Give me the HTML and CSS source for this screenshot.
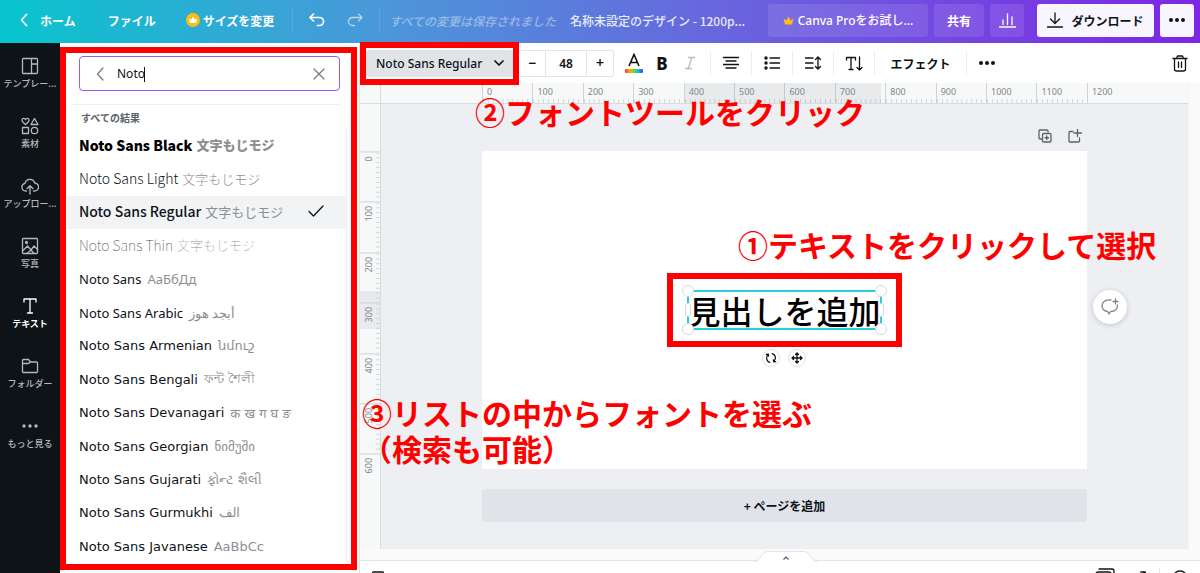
FILE: index.html
```html
<!DOCTYPE html>
<html lang="ja">
<head>
<meta charset="utf-8">
<meta name="viewport" content="width=device-width, initial-scale=1">
<title>名称未設定のデザイン</title>
<link rel="stylesheet" href="styles.css">
</head>
<body>
<div class="app">
  <header class="topbar">
    <a class="nav-link home" href="#">
      <svg width="8" height="14" viewBox="0 0 8 14" class="line w2"><path d="M6.500 1.500 1.500 7l5 5.500"/></svg>ホーム</a>
    <button class="nav-link file">ファイル</button>
    <button class="nav-link resize">
      <svg width="14" height="14" viewBox="0 0 14 14"><circle cx="7" cy="7" r="7" fill="#fdbc16"/><path d="M3.800 10 2.800 5.200l2.400 1.600L7 3.500l1.800 3.300 2.400-1.600L10.200 10z" fill="#fff"/></svg>サイズを変更</button>
    <span class="top-sep"></span>
    <button class="icon-btn undo" aria-label="元に戻す"><svg width="16" height="14" viewBox="0 0 16 14" class="line w2"><path d="M4.500 1 1 4.500 4.500 8M1 4.500h9.500a4 4 0 0 1 0 8H8.500"/></svg></button>
    <button class="icon-btn redo" aria-label="やり直す"><svg width="16" height="14" viewBox="0 0 16 14" class="line"><path d="M11.500 1 15 4.500 11.500 8M15 4.500H5.500a4 4 0 0 0 0 8h2"/></svg></button>
    <span class="top-sep"></span>
    <span class="saved">すべての変更は保存されました</span>
    <span class="doc-title">名称未設定のデザイン - 1200p...</span>
    <div class="top-actions">
      <button class="btn ghost pro"><svg width="11" height="9" viewBox="0 0 11 9"><path d="M2 8.500 .500 2.500 3.300 4.500 5.500 .500l2.200 4 2.800-2L9 8.500z" fill="#fdbc16"/></svg>Canva Proをお試し...</button>
      <button class="btn ghost share">共有</button>
      <button class="btn ghost stats" aria-label="統計"><svg width="17" height="15" viewBox="0 0 17 15" class="line"><path d="M.500 14h16M4 11.500V7M8.500 11.500V1M13 11.500V4"/></svg></button>
      <button class="btn solid download"><svg width="16" height="16" viewBox="0 0 16 16" class="line"><path d="M8 1v10M3.500 7 8 11.500 12.500 7M.500 15h15"/></svg>ダウンロード</button>
      <button class="btn solid more" aria-label="その他"><svg width="16" height="4" viewBox="0 0 16 4" fill="#0e1318"><circle cx="2" cy="2" r="2"/><circle cx="8" cy="2" r="2"/><circle cx="14" cy="2" r="2"/></svg></button>
    </div>
  </header>

  <div class="workspace">
    <nav class="rail">
      <button class="rail-item"><svg width="18" height="18" viewBox="0 0 18 18" class="line"><rect x="1.500" y="1.500" width="15" height="15" rx="1"/><path d="M10.500 1.500v15M10.500 7h6"/></svg><span>テンプレー...</span></button>
      <button class="rail-item"><svg width="18" height="18" viewBox="0 0 18 18" class="line"><path d="M4.500 7.500C2 5.500 1 4.600 1 3.200 1 1 3.800.700 4.500 2.600 5.200.700 8 1 8 3.200 8 4.600 7 5.500 4.500 7.500zM13.500 1.500 17 7.500h-7z"/><rect x="1.500" y="10.500" width="6" height="6"/><circle cx="13.500" cy="13.500" r="3.200"/></svg><span>素材</span></button>
      <button class="rail-item"><svg width="18" height="18" viewBox="0 0 18 18" class="line"><path d="M5.500 14H4.700A3.900 3.900 0 0 1 4 6.300 5 5 0 0 1 13.700 6 4 4 0 0 1 13.500 14h-1M9 17V9M6.200 11.500 9 8.700l2.800 2.800"/></svg><span>アップロー...</span></button>
      <button class="rail-item"><svg width="18" height="18" viewBox="0 0 18 18" class="line"><rect x="1.500" y="1.500" width="15" height="15" rx="1"/><circle cx="5.500" cy="5.500" r="1"/><path d="m1.500 14 5-5 3.500 4 3-4 3.500 3.500M6 16.500l4-3.500 3 3.500"/></svg><span>写真</span></button>
      <button class="rail-item active"><svg width="18" height="18" viewBox="0 0 18 18" class="line"><path d="M3 5V2h12v3M9 2v14M6.500 16h5"/></svg><span>テキスト</span></button>
      <button class="rail-item"><svg width="18" height="18" viewBox="0 0 18 18" class="line"><path d="M1.500 14.500v-11a1 1 0 0 1 1-1h5l2 2.500h6a1 1 0 0 1 1 1v8.500a1 1 0 0 1-1 1h-13a1 1 0 0 1-1-1zM1.500 6.500h6L9.500 5"/></svg><span>フォルダー</span></button>
      <button class="rail-item"><svg width="18" height="18" viewBox="0 0 18 18" fill="currentColor"><circle cx="3" cy="9" r="1.700"/><circle cx="9" cy="9" r="1.700"/><circle cx="15" cy="9" r="1.700"/></svg><span>もっと見る</span></button>
    </nav>

    <section class="panel marked">
      <div class="search">
        <button class="icon-btn" aria-label="戻る"><svg width="8" height="14" viewBox="0 0 8 14" class="line"><path d="M7 1 1.500 7 7 13"/></svg></button>
        <div class="search-field"><input type="text" value="Noto" aria-label="フォントを検索"><span class="caret"></span></div>
        <button class="icon-btn" aria-label="消去"><svg width="12" height="12" viewBox="0 0 12 12" class="line"><path d="m1 1 10 10M11 1 1 11"/></svg></button>
      </div>
      <h2 class="results-title">すべての結果</h2>
      <ul class="fonts">
        <li><button class="font jp black">Noto Sans Black<span>文字もじモジ</span></button></li>
        <li><button class="font jp light">Noto Sans Light<span>文字もじモジ</span></button></li>
        <li><button class="font jp regular selected">Noto Sans Regular<span>文字もじモジ</span><svg width="16" height="12" viewBox="0 0 16 12" class="line check"><path d="m1 6.500 4.500 4.500L15 1"/></svg></button></li>
        <li><button class="font jp thin">Noto Sans Thin<span>文字もじモジ</span></button></li>
        <li><button class="font">Noto Sans<span>АаБбДд</span></button></li>
        <li><button class="font">Noto Sans Arabic<span>أبجد هوز</span></button></li>
        <li><button class="font wide">Noto Sans Armenian<span>նմուշ</span></button></li>
        <li><button class="font wide">Noto Sans Bengali<span>ফন্ট শৈলী</span></button></li>
        <li><button class="font wide">Noto Sans Devanagari<span>क ख ग घ ङ</span></button></li>
        <li><button class="font wide">Noto Sans Georgian<span>ნიმუში</span></button></li>
        <li><button class="font wide">Noto Sans Gujarati<span>ફોન્ટ શૈલી</span></button></li>
        <li><button class="font wide">Noto Sans Gurmukhi<span>الف</span></button></li>
        <li><button class="font wide">Noto Sans Javanese<span>AaBbCc</span></button></li>
      </ul>
    </section>

    <main class="editor">
      <div class="toolbar">
        <div class="font-tool marked"><button class="font-select">Noto Sans Regular<svg width="10" height="6" viewBox="0 0 10 6" class="line w2"><path d="m1 1 4 4 4-4"/></svg></button></div>
        <div class="stepper"><button aria-label="小さく">−</button><input type="text" value="48" aria-label="フォントサイズ"><button aria-label="大きく">+</button></div>
        <div class="style-tools">
          <button class="tool color" aria-label="文字色"><svg width="20" height="20" viewBox="0 0 20 20"><defs><linearGradient id="hue"><stop offset="0" stop-color="#ff3030"/><stop offset=".25" stop-color="#ffa800"/><stop offset=".5" stop-color="#6fdc2a"/><stop offset=".75" stop-color="#12b8e8"/><stop offset="1" stop-color="#4a3df5"/></linearGradient></defs><path d="M5 13 10 1.500 15 13M6.700 9.500h6.600" fill="none" stroke="#0e1318" stroke-width="1.600"/><rect x="1" y="16" width="18" height="4" rx="1" fill="url(#hue)"/></svg></button>
          <button class="tool bold">B</button>
          <button class="tool italic" aria-label="斜体"><svg width="12" height="14" viewBox="0 0 12 14" class="line"><path d="M4.500 1.500h6M1.500 12.500h6M7.800 1.500 4.200 12.500"/></svg></button>
        </div>
        <button class="tool cell" aria-label="配置"><svg width="16" height="14" viewBox="0 0 16 14" class="line"><path d="M.500 1.500h15M3 5h10M.500 8.500h15M3 12h10"/></svg></button>
        <button class="tool cell" aria-label="箇条書き"><svg width="16" height="14" viewBox="0 0 16 14" class="line"><path d="M6 2h9.500M6 7h9.500M6 12h9.500"/><g fill="currentColor" stroke="none"><circle cx="2" cy="2" r="1.700"/><circle cx="2" cy="7" r="1.700"/><circle cx="2" cy="12" r="1.700"/></g></svg></button>
        <button class="tool cell" aria-label="間隔"><svg width="16" height="14" viewBox="0 0 16 14" class="line"><path d="M.500 2H8M.500 7H8M.500 12H8M13 1v12M10.500 3.500 13 1l2.500 2.500M10.500 10.500 13 13l2.500-2.500"/></svg></button>
        <button class="tool cell" aria-label="縦書き"><svg width="18" height="15" viewBox="0 0 18 15" class="line"><path d="M1.500 4V1.500h9V4M6 1.500v12M4 13.500h4M14.500 1v13M12 11.500l2.500 2.500 2.500-2.500"/></svg></button>
        <button class="tool cell effects">エフェクト</button>
        <button class="tool cell" aria-label="その他"><svg width="16" height="4" viewBox="0 0 16 4" fill="currentColor"><circle cx="2" cy="2" r="2"/><circle cx="8" cy="2" r="2"/><circle cx="14" cy="2" r="2"/></svg></button>
        <button class="tool trash" aria-label="削除"><svg width="16" height="17" viewBox="0 0 16 17" class="line"><path d="M1 3.500h14M5 3.500V2a1 1 0 0 1 1-1h4a1 1 0 0 1 1 1v1.500M2.500 3.500V14a2 2 0 0 0 2 2h7a2 2 0 0 0 2-2V3.500M6.500 7v5.500M9.500 7v5.500"/></svg></button>
      </div>

      <div class="board">
        <div class="corner"></div>
        <div class="ruler across">
          <span>0</span><span>100</span><span>200</span><span>300</span><span>400</span><span>500</span><span>600</span><span>700</span><span>800</span><span>900</span><span>1000</span><span>1100</span><span class="end">1200</span>
          <i class="range"></i>
        </div>
        <div class="scroll-y"></div>
        <div class="ruler down">
          <i class="range"></i>
          <span>0</span><span>100</span><span>200</span><span>300</span><span>400</span><span>500</span><span class="end">600</span>
        </div>
        <div class="stage">
          <div class="page-tools">
            <button class="icon-btn" aria-label="ページを複製"><svg width="14" height="14" viewBox="0 0 14 14" class="line"><path d="M3.500 10H2a1 1 0 0 1-1-1V2a1 1 0 0 1 1-1h7a1 1 0 0 1 1 1v1"/><rect x="4.500" y="4.500" width="8.500" height="8.500" rx="1"/><path d="M8.750 7v3.500M7 8.750h3.500"/></svg></button>
            <button class="icon-btn" aria-label="ページを追加"><svg width="14" height="14" viewBox="0 0 14 14" class="line"><path d="M5 2.500H2a1 1 0 0 0-1 1V12a1 1 0 0 0 1 1h8.500a1 1 0 0 0 1-1V9M9.500 0v7.500M6 4h7.500"/></svg></button>
          </div>
          <div class="artboard">
            <div class="selection marked">
              <div class="textbox">見出しを追加
                <i class="knob nw"></i><i class="knob ne"></i><i class="knob sw"></i><i class="knob se"></i><i class="grip west"></i><i class="grip east"></i>
              </div>
              <div class="handles">
                <button aria-label="回転"><svg width="12" height="12" viewBox="0 0 12 12" class="line"><path d="M4.800 10.300A4.400 4.400 0 0 1 3 2.800M1.300 2.300l2-.200.300 2M7.200 1.700A4.400 4.400 0 0 1 9 9.200M10.700 9.700l-2 .200-.300-2"/></svg></button>
                <button aria-label="移動"><svg width="12" height="12" viewBox="0 0 12 12" class="line"><path d="M6 1v10M1 6h10M4.500 2.500 6 1l1.500 1.500M4.500 9.500 6 11l1.500-1.500M2.500 4.500 1 6l1.500 1.500M9.500 4.500 11 6 9.500 7.500"/></svg></button>
              </div>
            </div>
            <p class="note step1">①テキストをクリックして選択</p>
            <button class="comment" aria-label="コメント"><svg width="20" height="18" viewBox="0 0 20 18" class="line"><path d="M11 2C5.500 1.500 2 4 2 8c0 3 2.500 5 5.500 5.500L9 16l1.500-2.300C15 13.500 17.500 11 17.500 7M15.500 1v5M13 3.500h5"/></svg></button>
          </div>
          <button class="add-page">+ ページを追加</button>
          <p class="note step2">②フォントツールをクリック</p>
          <p class="note step3">③リストの中からフォントを選ぶ<br>（検索も可能）</p>
        </div>
        <div class="scroll-y"></div>
      </div>

      <footer class="bottom">
        <button class="drawer" aria-label="ページ一覧を開く"><svg width="64" height="12" viewBox="0 0 64 12"><path d="M0 11.500C8 11 7 1.500 14 1.500h36c7 0 6 9.500 14 10" fill="#fff" stroke="#e2e4e7"/><path d="m29.500 9.500 2.500-2.500 2.500 2.500" fill="none" stroke="#555b62" stroke-width="1.200"/></svg></button>
        <div class="status">
          <button class="icon-btn" aria-label="メモ"><svg width="12" height="14" viewBox="0 0 12 14" class="line"><rect x=".500" y="1" width="11" height="12" rx="1"/></svg></button>
          <div class="status-right">
            <button class="icon-btn grid-view" aria-label="グリッド"><svg width="20" height="18" viewBox="0 0 20 18" class="line"><path d="M4 1h13a2 2 0 0 1 2 2v10"/><rect x="1" y="4" width="15" height="13" rx="2"/></svg></button>
            <button class="icon-btn full-view" aria-label="全画面"><svg width="16" height="16" viewBox="0 0 16 16" class="line w2"><path d="M10 4h4v4M14 4 2 16"/></svg></button>
            <span class="status-sep"></span>
            <button class="icon-btn" aria-label="ヘルプ"><svg width="16" height="16" viewBox="0 0 16 16" class="line"><circle cx="8" cy="10" r="7"/></svg></button>
          </div>
        </div>
      </footer>
    </main>
  </div>
</div>
</body>
</html>
```

FILE: styles.css
```css
* { box-sizing: border-box; }

:root {
  --ink: #0e1318;
  --mark: #ff0000;
  --line: #e2e4e7;
  --inset: 101px;
  --art-width: calc(100vw - 595px);
  --unit: calc(var(--art-width) / 12);
}

body {
  margin: 0;
  color: var(--ink);
  font-family: "Noto Sans", "Noto Sans CJK JP", sans-serif;
  font-size: 12px;
}

button, input {
  margin: 0;
  padding: 0;
  border: 0;
  background: none;
  color: inherit;
  font: inherit;
}

svg { flex: none; display: block; }

.line {
  fill: none;
  stroke: currentColor;
  stroke-width: 1.3;
  stroke-linecap: round;
  stroke-linejoin: round;
}
.line.w2 { stroke-width: 1.7; }

.icon-btn { display: flex; align-items: center; justify-content: center; }

.app {
  display: flex;
  flex-direction: column;
  height: 100vh;
  overflow: hidden;
}

/* Top bar */
.topbar {
  flex: none;
  display: flex;
  align-items: center;
  height: 43px;
  padding: 0 6px 3px 20px;
  background: linear-gradient(90deg, #08c5cd 0%, #4b97d9 32%, #6a62de 62%, #7d26e4 100%);
  color: #fff;
  font-family: "Noto Sans CJK JP", sans-serif;
  font-weight: 700;
  white-space: nowrap;
}
.nav-link {
  display: flex;
  align-items: center;
  color: #fff;
  text-decoration: none;
}
.home { gap: 12px; }
.file { margin-left: 32px; }
.resize { gap: 3px; margin-left: 30px; }
.top-sep { width: 1px; height: 24px; margin-left: 18px; background: rgba(255, 255, 255, .1); }
.undo { margin-left: 16px; }
.redo { margin-left: 22px; opacity: .6; }
.top-sep + .saved { margin-left: 9px; }
.redo + .top-sep { margin-left: 16px; }
.saved { font-weight: 500; font-style: italic; opacity: .4; }
.doc-title { margin-left: 14px; font-weight: 500; opacity: .85; }
.top-actions { display: flex; gap: 6px; margin-left: auto; }
.btn {
  display: flex;
  align-items: center;
  justify-content: center;
  height: 33px;
  border-radius: 3px;
}
.ghost { background: rgba(255, 255, 255, .1); }
.solid { background: #f9f5fe; color: var(--ink); }
.pro { gap: 4px; width: 160px; font-family: "Noto Sans", "Noto Sans CJK JP", sans-serif; font-weight: 500; }
.share { width: 50px; }
.stats { width: 34px; }
.download { gap: 8px; width: 117px; margin-left: 7px; }
.more { width: 34px; }

/* Red frame around a highlighted region */
.marked { position: relative; }
.marked::after {
  content: "";
  position: absolute;
  inset: 0;
  border: 6px solid var(--mark);
  pointer-events: none;
}

.workspace { flex: 1; display: flex; min-height: 0; }

/* Side rail */
.rail {
  flex: none;
  width: 60px;
  padding-top: 14px;
  background: #0e1318;
}
.rail-item {
  display: flex;
  flex-direction: column;
  align-items: center;
  gap: 2px;
  width: 100%;
  height: 60px;
  color: #b4b8bc;
  font-family: "Noto Sans CJK JP", sans-serif;
  font-size: 9px;
  font-weight: 500;
  line-height: 14px;
  white-space: nowrap;
}
.rail-item.active { color: #fff; font-weight: 700; }

/* Font panel */
.panel {
  flex: none;
  display: flex;
  flex-direction: column;
  width: 300px;
  padding: 13px 12px 10px 7px;
  border-right: 1px solid var(--line);
}
.panel.marked::after { inset: 4px 2px 3px 0; }
.search {
  display: flex;
  align-items: center;
  height: 35px;
  margin: 0 7px 0 12px;
  padding: 0 14px 0 16px;
  border: 1px solid #9a5cf0;
  border-radius: 4px;
  color: #777c82;
}
.search-field { position: relative; flex: 1; margin-left: 13px; }
.search-field input { width: 100%; outline: 0; color: var(--ink); font-size: 12px; }
.caret { position: absolute; left: 27px; top: 2px; width: 1px; height: 15px; background: var(--ink); }
.results-title {
  margin: 13px 6px 0 4px;
  padding: 5px 0 3px 10px;
  border-top: 1px solid #eceef0;
  color: #5c6268;
  font-family: "Noto Sans CJK JP", sans-serif;
  font-size: 10px;
  font-weight: 700;
  line-height: 16px;
}
.fonts {
  flex: 1;
  display: grid;
  grid-auto-rows: minmax(32px, 1fr);
  margin: 0;
  padding: 0;
  border-right: 1px solid #f0f1f3;
  list-style: none;
}
.font {
  display: flex;
  align-items: center;
  gap: 6px;
  width: 100%;
  height: 100%;
  padding: 0 22px 0 12px;
  font-size: 13px;
  white-space: nowrap;
}
.font span { color: #8b8f94; }
.jp { gap: 4px; padding-bottom: 2px; font-family: "Noto Sans CJK JP", sans-serif; font-size: 14px; }
.jp span { font-size: 13px; }
.black { color: #000; font-weight: 900; }
.light { font-weight: 300; }
.regular { font-weight: 500; }
.regular span { font-weight: 400; }
.thin { color: #4c5157; font-weight: 100; }
.wide { font-family: "DejaVu Sans", "Noto Sans", sans-serif; }
.selected { background: #f2f3f5; }
.check { margin-left: auto; }

/* Editor */
.editor { flex: 1; display: flex; flex-direction: column; min-width: 0; }
.toolbar {
  flex: none;
  display: flex;
  align-items: center;
  height: 40px;
  padding-right: 8px;
  white-space: nowrap;
}
.font-tool { z-index: 2; width: 159px; padding: 0 6px; }
.font-tool.marked::after { inset: -8px 0; }
.font-select {
  display: flex;
  align-items: center;
  justify-content: space-between;
  width: 100%;
  height: 27px;
  padding: 0 9px 0 10px;
  border-radius: 3px;
  background: #e1e4e7;
  font-weight: 500;
}
.stepper {
  display: flex;
  height: 27px;
  border: 1px solid var(--line);
  border-left: 0;
  border-radius: 3px;
  font-weight: 600;
}
.stepper button { width: 26px; font-size: 14px; line-height: 24px; }
.stepper input {
  width: 42px;
  border: solid var(--line);
  border-width: 0 1px;
  text-align: center;
}
.style-tools { display: flex; padding: 0 6px; }
.tool {
  display: flex;
  align-items: center;
  justify-content: center;
  width: 28px;
  height: 27px;
}
.bold { font-size: 17px; font-weight: 800; }
.italic { color: #b8bcc0; }
.cell { flex: none; width: 41px; height: 24px; border-left: 1px solid #eceef0; }
.cell.effects { width: 92px; font-family: "Noto Sans CJK JP", sans-serif; font-weight: 700; }
.trash { width: 24px; margin-left: auto; }

.board {
  flex: 1;
  display: grid;
  grid-template-columns: 21px 1fr 12px;
  grid-template-rows: 21px 1fr;
  min-height: 0;
}
.corner, .ruler { background: #f7f9f9; }
.corner, .across { border-bottom: 1px solid #d9dcdf; }
.corner, .down { border-right: 1px solid #d9dcdf; }
.ruler {
  position: relative;
  display: flex;
  color: #82878d;
  font-size: 9px;
}
.across { padding-left: var(--inset); line-height: 18px; }
.across span {
  flex: none;
  width: var(--unit);
  padding-left: 4px;
  border-left: 1px solid #cfd3d6;
  background: linear-gradient(90deg, #d3d7da 1px, transparent 1px) 0 100% / 10% 4px repeat-x;
}
.across .end, .down .end { background: none; }
.range { position: absolute; background: rgba(120, 130, 145, .12); }
.across .range { left: 304px; width: 196px; top: 0; bottom: 0; }
.down { flex-direction: column; padding-top: 47px; overflow: hidden; line-height: 18px; }
.down span {
  flex: none;
  height: var(--unit);
  padding-bottom: 4px;
  border-bottom: 1px solid #cfd3d6;
  background: linear-gradient(0deg, #d3d7da 1px, transparent 1px) 0 0 / 4px 10% repeat-y;
  writing-mode: vertical-rl;
  transform: rotate(180deg);
  text-align: right;
}
.down .range { left: 0; right: 0; top: 187px; height: 38px; }
.scroll-y { border-left: 1px solid #f0f1f2; background: #fafafa; }

.stage {
  position: relative;
  display: flex;
  flex-direction: column;
  padding: 0 var(--inset);
  background: #edeff2;
}
.page-tools {
  display: flex;
  justify-content: flex-end;
  gap: 16px;
  height: 47px;
  padding: 16px 5px 0 0;
  color: #5c6268;
}
.artboard {
  position: relative;
  flex: none;
  display: flex;
  align-items: center;
  justify-content: center;
  aspect-ratio: 1200 / 630;
  background: #fff;
}
.selection { padding: 18px 21px; }
.textbox {
  position: relative;
  outline: 2px solid #26cfdc;
  outline-offset: -1px;
  font-family: "Noto Sans CJK JP", sans-serif;
  font-size: 32px;
  font-weight: 500;
  line-height: 38px;
  color: #000;
  white-space: nowrap;
}
.knob, .grip {
  position: absolute;
  border: 1px solid #d5d9dd;
  background: #fff;
}
.knob { width: 12px; height: 12px; border-radius: 50%; }
.nw { left: -6px; top: -6px; }
.ne { right: -6px; top: -6px; }
.sw { left: -6px; bottom: -6px; }
.se { right: -6px; bottom: -6px; }
.grip { top: 12px; width: 6px; height: 14px; border-radius: 3px; }
.west { left: -3px; }
.east { right: -3px; }
.handles {
  position: absolute;
  top: 100%;
  left: 0;
  right: 0;
  display: flex;
  justify-content: center;
  gap: 8px;
  padding-top: 2px;
}
.handles button {
  display: flex;
  align-items: center;
  justify-content: center;
  width: 18px;
  height: 18px;
  border: 1px solid #dfe2e5;
  border-radius: 50%;
  background: #fff;
}
.comment {
  position: absolute;
  left: calc(100% + 6px);
  top: 50%;
  display: flex;
  align-items: center;
  justify-content: center;
  width: 34px;
  height: 34px;
  margin-top: -20px;
  border-radius: 50%;
  background: #fff;
  box-shadow: 0 1px 5px rgba(60, 70, 85, .25);
  color: #7d8288;
}
.add-page {
  flex: none;
  height: 33px;
  margin-top: 20px;
  border-radius: 3px;
  background: #e0e4e8;
  font-family: "Noto Sans CJK JP", sans-serif;
  font-weight: 700;
}

/* Step captions laid over the editor */
.note {
  position: absolute;
  margin: 0;
  color: var(--mark);
  font-family: "Noto Sans CJK JP", sans-serif;
  font-size: 30px;
  font-weight: 700;
  line-height: 36px;
  white-space: nowrap;
}
.step1 { left: 256px; top: 75px; }
.step2 { left: 94px; top: -11px; }
.step3 { left: -19px; top: 290px; }

/* Bottom strip */
.bottom {
  position: relative;
  flex: none;
  height: 24px;
  padding-top: 11px;
  overflow: hidden;
  background: #fafafa;
}
.drawer { position: absolute; left: 50%; top: 1px; margin-left: -26px; }
.status {
  display: flex;
  justify-content: space-between;
  padding: 7px 12px 0;
  border-top: 1px solid var(--line);
  background: #fff;
}
.status .icon-btn { align-items: flex-start; }
.status > .icon-btn { padding-top: 3px; }
.status-right { display: flex; gap: 12px; }
.grid-view { margin-right: 4px; }
.status-sep { width: 1px; background: var(--line); }
```
